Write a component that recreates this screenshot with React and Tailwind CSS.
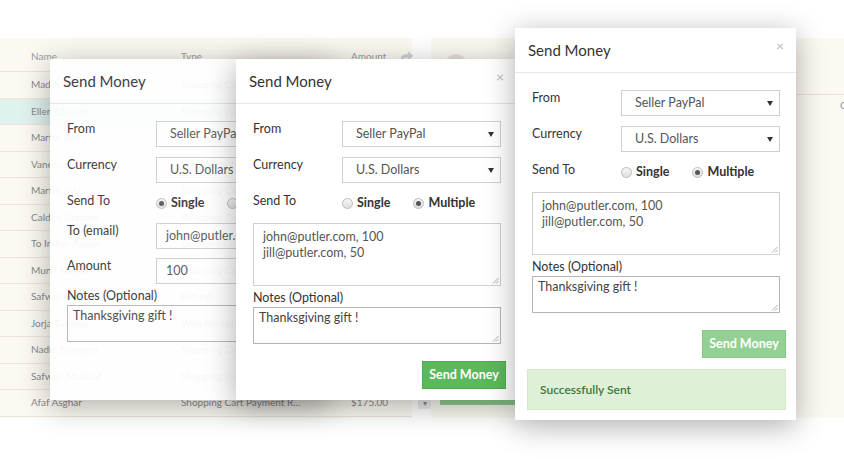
import React from "react";
import { FaShare } from "react-icons/fa";

const rows = [
  ["Madds Kristensen", "Shopping Cart Payment R...", "$45.00"],
  ["Ellen Clausen", "Shopping Cart Payment R...", "$120.00"],
  ["Martin Juhl", "Shopping Cart Payment R...", "$75.00"],
  ["Vanessa Hansen", "Web Accept", "$32.00"],
  ["Martin Juhl", "Shopping Cart Payment R...", "$60.00"],
  ["Calden Graham", "Shopping Cart Payment R...", "$89.00"],
  ["To Indian Rupee", "Currency Conversion", "$12.00"],
  ["Munif Nasser", "Shopping Cart Payment R...", "$49.00"],
  ["Safwan Haddad", "Refund", "$20.00"],
  ["Jorja Tunawa", "Web Accept", "$99.00"],
  ["Nadie Brongers", "Shopping Cart Payment R...", "$64.00"],
  ["Safwan Maalouf", "Shopping Cart Payment R...", "$38.00"],
  ["Afaf Asghar", "Shopping Cart Payment R...", "$175.00"],
];

function Radio({ checked, label }) {
  return (
    <span className="flex items-center gap-[4px]">
      <span className="w-[11px] h-[11px] rounded-full border border-[#bdbdbd] bg-gradient-to-b from-[#f6f6f6] to-[#dedede] flex items-center justify-center">
        {checked && <span className="w-[5px] h-[5px] rounded-full bg-[#555]" />}
      </span>
      <span className="font-bold text-[#333]">{label}</span>
    </span>
  );
}

function Select({ value }) {
  return (
    <div className="h-[26px] border border-[#cfcfcf] bg-white flex items-center justify-between pl-[13px] pr-[6px] text-[#555]">
      <span>{value}</span>
      <svg width="6" height="5" viewBox="0 0 6 5"><path d="M0 0 L6 0 L3 5 Z" fill="#333" /></svg>
    </div>
  );
}

function Handle() {
  return (
    <svg className="absolute right-[1px] bottom-[1px]" width="7" height="7" viewBox="0 0 7 7">
      <path d="M6.5 1 L1 6.5 M6.5 4 L4 6.5" stroke="#999" strokeWidth="0.8" />
    </svg>
  );
}

function Modal({ mode, success, className }) {
  return (
    <div className={"bg-white w-[280px] shadow-[0_6px_28px_rgba(0,0,0,0.32)] text-[12.5px] leading-[16px] font-['Lato',sans-serif] " + className}>
      <div className="h-[45px] border-b border-[#e6e6e6] flex items-center justify-between pl-[13px] pr-[12px]">
        <span className="text-[15px] text-[#333]">Send Money</span>
        <span className="text-[14px] text-[#bdbdbd] -mt-[8px]">×</span>
      </div>
      <div className="pt-[17px] pl-[17px] pr-[15px] pb-[11px] flex flex-col">
        <div className="grid grid-cols-[89px_159px] gap-y-[10px]">
          <span className="text-[#333]">From</span>
          <Select value="Seller PayPal" />
          <span className="text-[#333]">Currency</span>
          <Select value="U.S. Dollars" />
          <span className="text-[#333] h-[20px]">Send To</span>
          <div className="flex items-center gap-[23px] h-[18px] mt-[1px]">
            <Radio checked={mode === "single"} label="Single" />
            <Radio checked={mode === "multiple"} label="Multiple" />
          </div>
          {mode === "single" && (
            <>
              <span className="text-[#333]">To (email)</span>
              <div className="h-[26px] border border-[#cfcfcf] bg-white flex items-center pl-[9px] text-[#555]">john@putler.com</div>
              <span className="text-[#333] -mt-[1px]">Amount</span>
              <div className="h-[26px] -mt-[1px] border border-[#cfcfcf] bg-white flex items-center pl-[9px] text-[#555]">100</div>
            </>
          )}
        </div>
        {mode === "multiple" && (
          <div className="relative mt-[10px] h-[63px] w-[248px] border border-[#cfcfcf] pl-[9px] pt-[5px] text-[#555]">
            <div>john@putler.com, 100</div>
            <div>jill@putler.com, 50</div>
            <Handle />
          </div>
        )}
        <span className="mt-[4px] text-[#333]">Notes (Optional)</span>
        <div className="relative mt-[1px] h-[37px] w-[248px] border border-[#b5b5b5] pl-[5px] pt-[2px] text-[#444]">
          Thanksgiving gift !
          <Handle />
        </div>
        <div className="flex justify-end mt-[17px] -mr-[5px]">
          <span
            className={
              "h-[28px] w-[84px] flex items-center justify-center text-white font-bold text-[12.5px] border " +
              (success ? "bg-[#93d093] border-[#89c989]" : "bg-[#5cb85c] border-[#4cae4c]")
            }
          >
            Send Money
          </span>
        </div>
        {success && (
          <div className="mt-[11px] -ml-[5px] -mr-[5px] h-[41px] bg-[#dff0d8] border border-[#d6e9c6] flex items-center pl-[12px] text-[#3c763d] font-semibold text-[12px]">
            Successfully Sent
          </div>
        )}
      </div>
    </div>
  );
}

export default function App() {
  return (
    <div className="relative w-[844px] h-[459px] bg-white overflow-hidden font-['Lato',sans-serif]">
      <div className="flex gap-[19px] pt-[38px] h-[418px]">
        <div className="w-[412px] bg-[#fcf9f2] flex flex-col text-[10px] text-[#8a8a8a]">
          <div className="h-[34px] border-b border-[#e9e5dd] grid grid-cols-[150px_170px_1fr] pl-[31px] items-center pt-[4px] text-[#9a9a9a]">
            <span>Name</span>
            <span>Type</span>
            <span className="flex items-center gap-[15px]">Amount <FaShare className="text-[#d0d0d0]" size={12} /></span>
          </div>
          {rows.map((r, i) => (
            <div
              key={i}
              className={
                "h-[26.5px] border-b border-[#ebe7df] grid grid-cols-[150px_170px_1fr] pl-[31px] items-center " +
                (i === 1 ? "bg-[#dff2ee]" : "")
              }
            >
              <span>{r[0]}</span>
              <span>{r[1]}</span>
              <span className="flex items-center gap-[30px]">
                {r[2]}
                <span className="w-[13px] h-[12px] bg-[#ebebeb] flex items-center justify-center text-[8px]">▾</span>
              </span>
            </div>
          ))}
        </div>
        <div className="flex-1 bg-[#fcf9f2] flex flex-col">
          <div className="h-[57px] border-b border-[#e6e2da] flex items-start pl-[14px] pt-[16px]">
            <span className="w-[22px] h-[22px] rounded-full bg-[#e4e1da]" />
          </div>
          <div className="flex justify-end pr-0 pt-[3px] text-[10px] text-[#999]">
            <span className="-mr-[4px]">Q</span>
          </div>
          <div className="flex-1" />
          <div className="ml-[9px] w-[120px] h-[20px] mb-[13px] bg-[#8fce8f]" />
        </div>
      </div>

      <Modal mode="single" className="absolute left-[50px] top-[59px] h-[341px] opacity-[0.93]" />
      <Modal mode="multiple" className="absolute left-[236px] top-[59px] h-[341px]" />
      <Modal mode="multiple" success className="absolute left-[515px] top-[28px] h-[392px] w-[281px]" />
    </div>
  );
}
